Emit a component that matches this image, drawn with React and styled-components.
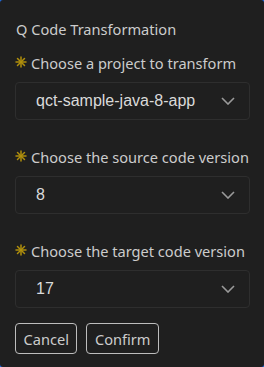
import React from 'react'
import styled, { createGlobalStyle } from 'styled-components'

const Global = createGlobalStyle`
  html, body {
    margin: 0;
    padding: 0;
    background: #1f6feb;
  }
  #root {
    width: 264px;
    height: 367px;
  }
`

const Panel = styled.div`
  box-sizing: border-box;
  width: 264px;
  height: 367px;
  background: #1f1f1f;
  border-radius: 3px;
  padding: 19px 14px 0 15px;
  color: #cccccc;
  font-family: "Segoe UI", "Noto Sans", sans-serif;
`

const Title = styled.div`
  font-size: 14.6px;
  line-height: 20px;
  padding-left: 1px;
  margin-bottom: 14px;
`

const Field = styled.div`
  margin-bottom: ${p => p.last ? '15px' : '27px'};
`

const Label = styled.div`
  display: flex;
  align-items: center;
  font-size: 14.6px;
  line-height: 20px;
  margin-bottom: 9px;
`

const Star = styled.svg`
  flex: none;
  width: 12px;
  height: 12px;
  margin: 0 4px 2px 0;
`

const Select = styled.div`
  box-sizing: border-box;
  height: 38px;
  width: 235px;
  display: flex;
  align-items: center;
  justify-content: space-between;
  padding: 0 14px 0 20px;
  background: #1f1f1f;
  border: 1px solid #2e2e2e;
  border-radius: 4px;
  font-family: "Liberation Sans", Arial, sans-serif;
  font-size: 16px;
  color: #dadada;
`

const Buttons = styled.div`
  display: flex;
  gap: 9px;
`

const Button = styled.button`
  box-sizing: border-box;
  height: 31px;
  padding: 0 7.5px;
  background: transparent;
  color: #cccccc;
  border: 1px solid #bdbdbd;
  border-radius: 4px;
  font-family: "Segoe UI", "Noto Sans", sans-serif;
  font-size: 14.6px;
`

const Asterisk = () => (
  <Star viewBox="0 0 12 12">
    <g stroke="#b08f0c" strokeWidth="1.5" strokeLinecap="round">
      <path d="M6 1 V11" />
      <path d="M1 6 H11" />
      <path d="M2.5 2.5 L9.5 9.5" />
      <path d="M9.5 2.5 L2.5 9.5" />
    </g>
  </Star>
)

const Chevron = () => (
  <svg width="14" height="8" viewBox="0 0 14 8">
    <path d="M1 1 L7 7 L13 1" fill="none" stroke="#9a9a9a" strokeWidth="1.6" />
  </svg>
)

const fields = [
  { label: 'Choose a project to transform', value: 'qct-sample-java-8-app' },
  { label: 'Choose the source code version', value: '8' },
  { label: 'Choose the target code version', value: '17' },
]

export default function App() {
  return (
    <>
      <Global />
      <Panel>
        <Title>Q Code Transformation</Title>
        {fields.map((f, i) => (
          <Field key={f.label} last={i === fields.length - 1}>
            <Label><Asterisk />{f.label}</Label>
            <Select>
              <span>{f.value}</span>
              <Chevron />
            </Select>
          </Field>
        ))}
        <Buttons>
          <Button>Cancel</Button>
          <Button>Confirm</Button>
        </Buttons>
      </Panel>
    </>
  )
}
